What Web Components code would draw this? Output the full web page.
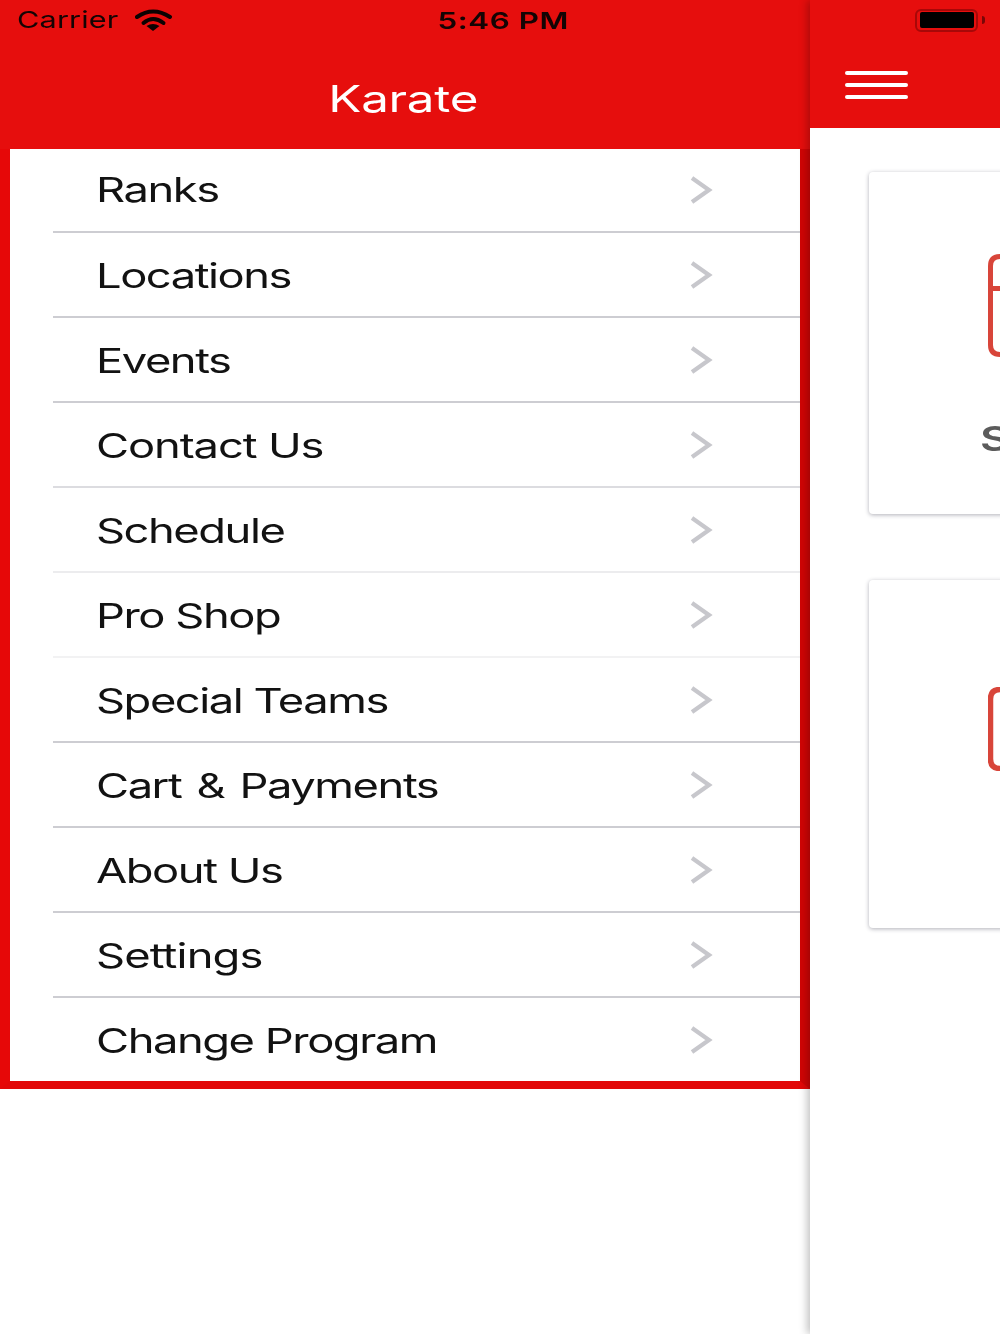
<!DOCTYPE html>
<html lang="en">
<head>
<meta charset="utf-8">
<title>Karate</title>
<style>
html,body{margin:0;padding:0;background:#fff;font-family:Inter,"Liberation Sans",sans-serif}
</style>
</head>
<body>
<x-app>
  <x-status slot="status"></x-status>
  <x-drawer slot="drawer" title="Karate">
    <x-row line="#cdcdd2">Ranks</x-row>
    <x-row line="#cdcdd2">Locations</x-row>
    <x-row line="#cdcdd2">Events</x-row>
    <x-row line="#dcdce0" style="letter-spacing:-.85px">Contact Us</x-row>
    <x-row line="#ececee">Schedule</x-row>
    <x-row line="#f2f2f3">Pro Shop</x-row>
    <x-row line="#cdcdd2">Special Teams</x-row>
    <x-row line="#cdcdd2" style="word-spacing:3px">Cart &amp; Payments</x-row>
    <x-row line="#cdcdd2">About Us</x-row>
    <x-row line="#cdcdd2" style="letter-spacing:-.65px">Settings</x-row>
    <x-row>Change Program</x-row>
  </x-drawer>
  <x-main slot="main">
    <x-card kind="a" label="S"></x-card>
    <x-card kind="b"></x-card>
  </x-main>
</x-app>
<script>
function def(name, html, init){
  customElements.define(name, class extends HTMLElement{
    constructor(){super();this.attachShadow({mode:'open'}).innerHTML=html;}
    connectedCallback(){if(init)init(this,this.shadowRoot);}
  });
}
const stretch = `display:inline-block;transform:scaleX(1.333);filter:blur(.45px);white-space:nowrap;`;

def('x-app',`<style>
:host{display:block;width:1000px;height:1334px;position:relative;overflow:hidden;background:#fff}
.wrap{display:flex;align-items:flex-start;height:100%}
.over{position:absolute;left:0;top:0;right:0;z-index:5}
</style>
<div class="wrap"><slot name="drawer"></slot><slot name="main"></slot></div>
<div class="over"><slot name="status"></slot></div>`);

def('x-status',`<style>
:host{display:grid;grid-template-columns:1fr auto 1fr;align-items:center;height:40px;padding:0 15px 0 17px;color:#140404;font-family:Inter,"Liberation Sans",sans-serif}
.left{display:flex;align-items:center}
.c{${stretch}font-size:23px;font-weight:400;transform-origin:left center;letter-spacing:.1px}
.w{margin-left:41px;display:block}
.t{${stretch}font-size:23.5px;font-weight:600;transform-origin:center;letter-spacing:.4px;margin-left:4px}
.right{display:flex;justify-content:flex-end;align-items:center;gap:4px}
.bat{width:63px;height:23px;box-sizing:border-box;border:2.500px solid #a80808;border-radius:6px;padding:1.500px 2.500px;display:flex;filter:blur(.5px)}
.bat i{flex:1;background:#000;border-radius:2px}
.nub{width:3px;height:8px;background:#7a0707;border-radius:0 3px 3px 0;filter:blur(.4px)}
</style>
<div class="left"><span class="c">Carrier</span>
<svg class="w" width="40" height="22" viewBox="0 0 40 22" style="filter:blur(.4px)"><g fill="none" stroke="#0c0202" stroke-width="4" stroke-linecap="round"><path d="M3 8Q19-3 36 8"/><path d="M9.5 14Q19 6 29.500 14"/></g><path d="M12.500 17Q19 13 25.500 17L19 22Z" fill="#0c0202"/></svg></div>
<span class="t">5:46 PM</span>
<div class="right"><div class="bat"><i></i></div><div class="nub"></div></div>`);

def('x-drawer',`<style>
:host{display:block;flex:0 0 810px;width:810px;background:#e60e0d;font-family:Inter,"Liberation Sans",sans-serif}
.head{height:149px;box-sizing:border-box;padding:75px 3px 0 0;display:flex;justify-content:center}
.title{${stretch}font-size:37px;line-height:48px;color:#fff;transform-origin:center;font-weight:400;letter-spacing:-.2px}
.list{display:flex;flex-direction:column;background:#fff;border-left:10px solid #e60808;border-right:10px solid #d00505;border-bottom:8px solid #e20808;height:932px}
</style>
<div class="head"><span class="title"></span></div>
<div class="list"><slot></slot></div>`,(el,root)=>{root.querySelector('.title').textContent=el.getAttribute('title')});

def('x-row',`<style>
:host{display:block;flex:0 0 85px;box-sizing:border-box;padding-left:43px;letter-spacing:-1.100px}
:host(:first-child){flex-basis:84px}
:host(:last-child){flex-basis:83px}
.in{height:100%;box-sizing:border-box;display:flex;align-items:center;justify-content:space-between;padding:0 87px 0 43px;border-bottom:2px solid var(--line,transparent)}
:host(:last-child) .in{padding-top:2px}
.t{${stretch}font-size:34px;color:#121212;transform-origin:left center;padding-top:1px}
:host(:first-child) .t{padding-top:0;padding-bottom:1px}
svg{display:block;filter:blur(.4px)}
</style>
<div class="in"><span class="t"><slot></slot></span>
<svg width="24" height="30" viewBox="0 0 24 30"><path d="M3 3L20 15L3 27" fill="none" stroke="#c7c7cc" stroke-width="4.200"/></svg></div>`,
(el,root)=>{const l=el.getAttribute('line'); if(l) root.querySelector('.in').style.setProperty('--line',l)});

def('x-main',`<style>
:host{display:block;flex:1 1 auto;height:1334px;background:#fff;position:relative;z-index:2;box-shadow:-3px 0 8px rgba(0,0,0,.24);overflow:hidden;min-width:0}
.bar{height:128px;background:#e60e0d;box-sizing:border-box;padding:71px 0 0 35px;display:flex;flex-direction:column;gap:8.500px}
.bar i{display:block;width:63px;height:3.500px;background:#fff;border-radius:2px;filter:blur(.4px)}
.body{padding:44px 0 0 59px;display:flex;flex-direction:column;gap:66px}
</style>
<div class="bar"><i></i><i></i><i></i></div>
<div class="body"><slot></slot></div>`);

const icons={
 a:`<svg width="40" height="103" viewBox="0 0 40 103"><path d="M40 2.500H12Q2.500 2.500 2.500 12V91Q2.500 100.500 12 100.500H40M2.500 34.500H40" fill="none" stroke="#d8453a" stroke-width="5"/></svg>`,
 b:`<svg width="40" height="84" viewBox="0 0 40 84"><path d="M40 2.500H12Q2.500 2.500 2.500 12V72Q2.500 81.500 12 81.500H40" fill="none" stroke="#d8453a" stroke-width="5.500"/></svg>`
};
def('x-card',`<style>
:host{display:block;width:300px;box-sizing:border-box;background:#fff;border-radius:4px;box-shadow:0 1px 4px rgba(40,40,60,.36);font-family:Inter,"Liberation Sans",sans-serif}
:host([kind=a]){height:342px;padding-top:82px}
:host([kind=b]){height:348px;padding-top:107px}
.ic{display:block;margin-left:119px;filter:blur(.5px)}
.ic svg{display:block}
.s{display:block;margin:62px 0 0 111px;line-height:40px;height:40px}
.s span{${stretch}font-size:34px;font-weight:600;color:#5b5b5b;transform-origin:left center}
</style>
<div class="ic"></div><div class="s"><span></span></div>`,(el,root)=>{
  root.querySelector('.ic').innerHTML=icons[el.getAttribute('kind')];
  const l=el.getAttribute('label');
  if(l) root.querySelector('.s span').textContent=l; else root.querySelector('.s').remove();
});
</script>
</body>
</html>
